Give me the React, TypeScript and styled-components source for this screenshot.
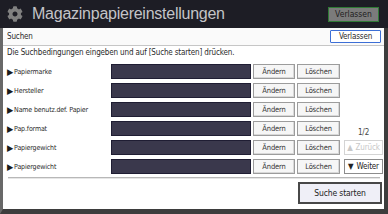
import styled, { createGlobalStyle } from "styled-components";
import { FaCog } from "react-icons/fa";

const GlobalStyle = createGlobalStyle`
  html, body {
    margin: 0;
    padding: 0;
    background: #2a2a30;
  }
  * {
    box-sizing: border-box;
  }
`

type SideKind = 'none' | 'page' | 'up' | 'down';

const rows: { label: string; side: SideKind }[] = [
  { label: 'Papiermarke', side: 'none' },
  { label: 'Hersteller', side: 'none' },
  { label: 'Name benutz.def. Papier', side: 'none' },
  { label: 'Pap.format', side: 'page' },
  { label: 'Papiergewicht', side: 'up' },
  { label: 'Papiergewicht', side: 'down' },
];

const App = () => {
  return (
    <Screen>
      <GlobalStyle />
      <Header>
        <FaCog size={16} color="#808080" />
        <Title>Magazinpapiereinstellungen</Title>
        <HeaderButton>Verlassen</HeaderButton>
      </Header>
      <Panel>
        <SubBar>
          <span>Suchen</span>
          <ExitButton>Verlassen</ExitButton>
        </SubBar>
        <Hint>Die Suchbedingungen eingeben und auf [Suche starten] drücken.</Hint>
        <Rows>
          {rows.map((row, i) => (
            <Row key={i}>
              <Label><Arrow>▶</Arrow>{row.label}</Label>
              <Field />
              <SmallButton $w={42}>Ändern</SmallButton>
              <SmallButton $w={43}>Löschen</SmallButton>
              <Side>
                {row.side === 'page' && <PageNo>1/2</PageNo>}
                {row.side === 'up' && <PageButton $disabled><Tri>▲</Tri>Zurück</PageButton>}
                {row.side === 'down' && <PageButton><Tri>▼</Tri>Weiter</PageButton>}
              </Side>
            </Row>
          ))}
        </Rows>
        <Divider />
        <Footer>
          <StartButton>Suche starten</StartButton>
        </Footer>
      </Panel>
    </Screen>
  );
};

export default App;

const smallFont = `"DejaVu Sans", sans-serif`;

export const Screen = styled.div`
  width: 388px;
  height: 214px;
  display: flex;
  flex-direction: column;
  overflow: hidden;
`

export const Header = styled.div`
  height: 28px;
  flex: none;
  display: flex;
  align-items: center;
  padding: 0 9px 0 7px;
  background: #1d1d25;
`

export const Title = styled.div`
  flex: 1;
  margin-left: 9px;
  font-family: "Liberation Sans", Arial, sans-serif;
  font-size: 16px;
  color: #c4c4c8;
  letter-spacing: -0.25px;
`

export const HeaderButton = styled.div`
  width: 51px;
  height: 15px;
  display: flex;
  align-items: center;
  justify-content: center;
  border: 1px solid #2f7a35;
  background: #7b7b7b;
  color: #1e1e1e;
  font-family: ${smallFont};
  font-stretch: condensed;
  font-size: 8.5px;
`

export const Panel = styled.div`
  flex: 1;
  display: flex;
  flex-direction: column;
  background: #ffffff;
  border-left: 3px solid #686868;
  border-right: 4px solid #3d3d3d;
  border-bottom: 5px solid #3d3d3d;
  font-family: ${smallFont};
  font-stretch: condensed;
  font-size: 7.5px;
  letter-spacing: -0.15px;
  color: #2a2a2a;
`

export const SubBar = styled.div`
  height: 18px;
  flex: none;
  display: flex;
  align-items: center;
  justify-content: space-between;
  padding: 0 3px 0 4px;
  background: #fafafa;
  border-bottom: 1px solid #c6c6c6;
  font-size: 8px;
`

export const ExitButton = styled.div`
  width: 51px;
  height: 13px;
  display: flex;
  align-items: center;
  justify-content: center;
  border: 1px solid #3c6fd6;
  border-radius: 1px;
  background: #ffffff;
  font-size: 8px;
`

export const Hint = styled.div`
  padding: 2px 0 0 4px;
  height: 16px;
  line-height: 10px;
  font-size: 8px;
`

export const Rows = styled.div`
  display: flex;
  flex-direction: column;
`

export const Row = styled.div`
  height: 19px;
  display: flex;
  align-items: center;
  gap: 2px;
  padding-left: 4px;
`

export const Label = styled.div`
  width: 102px;
  display: flex;
  align-items: center;
  white-space: nowrap;
  font-size: 7px;
`

export const Arrow = styled.span`
  font-size: 9px;
  margin-right: 1px;
  color: #1a1a1a;
`

export const Field = styled.div`
  width: 140px;
  height: 15px;
  background: #3a384c;
  border: 1px solid #1f1d33;
`

export const SmallButton = styled.div<{ $w: number }>`
  width: ${p => p.$w}px;
  height: 15px;
  display: flex;
  align-items: center;
  justify-content: center;
  background: #f6f6f6;
  border: 1px solid #9c9c9c;
  box-shadow: inset -1px -1px 0 #d8d8d8;
  color: #333;
`

export const Side = styled.div`
  width: 39px;
  height: 15px;
  margin-left: 2px;
  display: flex;
  align-items: center;
  justify-content: center;
`

export const PageNo = styled.div`
  margin-top: 8px;
  color: #444;
  font-size: 8px;
`

export const PageButton = styled.div<{ $disabled?: boolean }>`
  width: 100%;
  height: 100%;
  display: flex;
  align-items: center;
  justify-content: center;
  gap: 3px;
  white-space: nowrap;
  background: #ffffff;
  border: 1px solid ${p => p.$disabled ? '#d4d4d4' : '#8c8c8c'};
  color: ${p => p.$disabled ? '#c8c8c8' : '#222'};
  font-size: 8px;
`

export const Tri = styled.span`
  font-size: 8px;
`

export const Divider = styled.div`
  margin: 1px 4px 0 5px;
  border-top: 1px solid #b8b8b8;
  border-bottom: 1px solid #e6e6e6;
`

export const Footer = styled.div`
  display: flex;
  justify-content: flex-end;
  padding: 3px 2px 0 0;
`

export const StartButton = styled.div`
  width: 84px;
  height: 22px;
  display: flex;
  align-items: center;
  justify-content: center;
  background: #efeff7;
  border: 2px solid #484848;
  font-size: 8.5px;
  color: #222;
`
